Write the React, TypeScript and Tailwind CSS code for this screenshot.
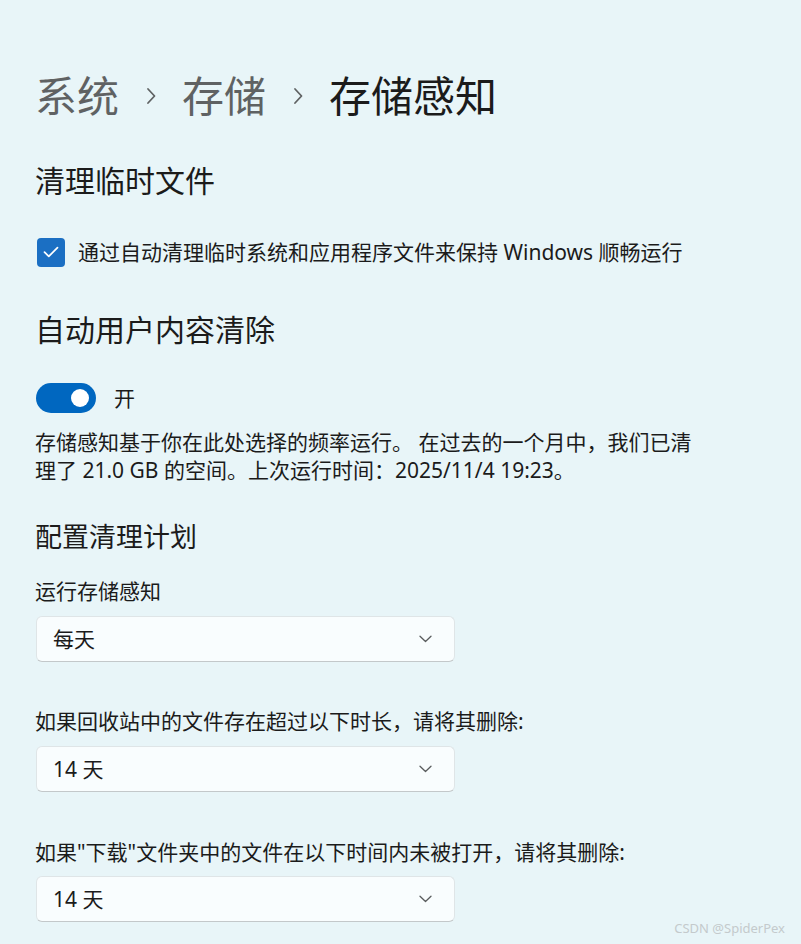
const font = "font-['Segoe_UI','Noto_Sans','Noto_Sans_CJK_SC',sans-serif]";

function Chevron() {
  return (
    <svg width="13" height="8" viewBox="0 0 13 8" fill="none" className="shrink-0">
      <path d="M1 1.2 L6.5 6.5 L12 1.2" stroke="#5a5d5e" strokeWidth="1.3" strokeLinecap="round" strokeLinejoin="round" />
    </svg>
  );
}

function Select({ value }: { value: string }) {
  return (
    <div className="flex h-[46px] w-[419px] items-center justify-between rounded-[6px] border border-[#dfe5e7] border-b-[#c3c8ca] bg-[#f9fdfe] pl-[16px] pr-[22px]">
      <span className="text-[21px] leading-[28px] text-[#1b1b1b]">{value}</span>
      <Chevron />
    </div>
  );
}

export default function App() {
  return (
    <div className={`${font} relative min-h-[944px] w-full bg-[#e8f5f8] pl-[35px] pt-[68px] text-[#1b1b1b]`}>
      {/* breadcrumb */}
      <div className="flex h-[56px] items-center text-[42px] leading-[56px]">
        <span className="text-[#5f6263]">系统</span>
        <span className="flex w-[63px] justify-center">
          <svg width="12" height="18" viewBox="0 0 12 18" fill="none">
            <path d="M3 2 L9.5 9 L3 16" stroke="#5f6263" strokeWidth="1.8" strokeLinecap="round" strokeLinejoin="round" />
          </svg>
        </span>
        <span className="text-[#5f6263]">存储</span>
        <span className="flex w-[63px] justify-center">
          <svg width="12" height="18" viewBox="0 0 12 18" fill="none">
            <path d="M3 2 L9.5 9 L3 16" stroke="#5f6263" strokeWidth="1.8" strokeLinecap="round" strokeLinejoin="round" />
          </svg>
        </span>
        <span className="text-[#1b1b1b]">存储感知</span>
      </div>

      <h2 className="mt-[37px] text-[30px] leading-[40px] font-normal">清理临时文件</h2>

      <label className="mt-[36px] flex h-[30px] items-center gap-[13px]">
        <span className="ml-[2px] flex h-[29px] w-[28px] items-center justify-center rounded-[4px] bg-[#1b6fc3]">
          <svg width="16" height="12" viewBox="0 0 16 12" fill="none">
            <path d="M1.5 6.2 L5.8 10.4 L14.5 1.6" stroke="white" strokeWidth="1.7" strokeLinecap="round" strokeLinejoin="round" />
          </svg>
        </span>
        <span className="text-[21px] leading-[28px]">通过自动清理临时系统和应用程序文件来保持 Windows 顺畅运行</span>
      </label>

      <h2 className="mt-[43px] text-[30px] leading-[40px] font-normal">自动用户内容清除</h2>

      <div className="mt-[33px] flex h-[30px] items-center gap-[18px]">
        <span className="ml-[1px] flex h-[30px] w-[60px] items-center justify-end rounded-full bg-[#0067c0] pr-[7px]">
          <span className="h-[18px] w-[18px] rounded-full bg-white" />
        </span>
        <span className="text-[21px] leading-[28px]">开</span>
      </div>

      <p className="mt-[15px] text-[21px] leading-[28px]">
        <span className="block">存储感知基于你在此处选择的频率运行。 在过去的一个月中，我们已清</span>
        <span className="block">理了 21.0 GB 的空间。上次运行时间：2025/11/4 19:23。</span>
      </p>

      <h3 className="mt-[35px] text-[27px] leading-[36px] font-normal">配置清理计划</h3>

      <div className="mt-[22px] text-[21px] leading-[28px]">运行存储感知</div>
      <div className="mt-[11px] ml-[1px]">
        <Select value="每天" />
      </div>

      <div className="mt-[45px] text-[21px] leading-[28px]">如果回收站中的文件存在超过以下时长，请将其删除:</div>
      <div className="mt-[11px] ml-[1px]">
        <Select value="14 天" />
      </div>

      <div className="mt-[46px] text-[21px] leading-[28px]">如果"下载"文件夹中的文件在以下时间内未被打开，请将其删除:</div>
      <div className="mt-[10px] ml-[1px]">
        <Select value="14 天" />
      </div>

      <div className="absolute bottom-[8px] right-[16px] text-[13px] leading-[16px] text-[#c4cacc]">CSDN @SpiderPex</div>
    </div>
  );
}
